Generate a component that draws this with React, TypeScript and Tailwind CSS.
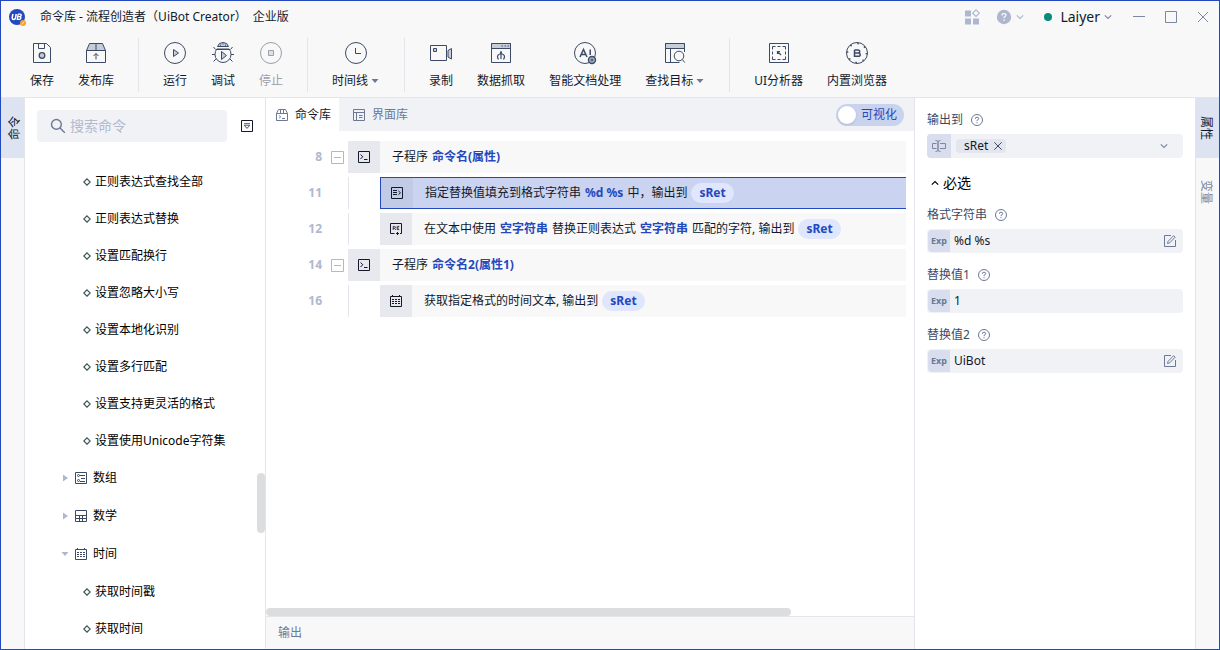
import { useState } from 'react'
import type { ReactNode } from 'react'

type IconProps = { className?: string }

type Part = { text: string; kind?: 'link' | 'chip' }

type CommandLine = {
  no: number
  child: boolean
  icon: (p: IconProps) => ReactNode
  parts: Part[]
}

const LEAVES_TOP = [
  '正则表达式查找全部',
  '正则表达式替换',
  '设置匹配换行',
  '设置忽略大小写',
  '设置本地化识别',
  '设置多行匹配',
  '设置支持更灵活的格式',
  '设置使用Unicode字符集',
]

const LEAVES_TIME = ['获取时间戳', '获取时间']

const LINES: CommandLine[] = [
  {
    no: 8,
    child: false,
    icon: TerminalIcon,
    parts: [{ text: '子程序' }, { text: '命令名(属性)', kind: 'link' }],
  },
  {
    no: 11,
    child: true,
    icon: FormatIcon,
    parts: [
      { text: '指定替换值填充到格式字符串' },
      { text: '%d %s', kind: 'link' },
      { text: '中，输出到' },
      { text: 'sRet', kind: 'chip' },
    ],
  },
  {
    no: 12,
    child: true,
    icon: RegexIcon,
    parts: [
      { text: '在文本中使用' },
      { text: '空字符串', kind: 'link' },
      { text: '替换正则表达式' },
      { text: '空字符串', kind: 'link' },
      { text: '匹配的字符, 输出到' },
      { text: 'sRet', kind: 'chip' },
    ],
  },
  {
    no: 14,
    child: false,
    icon: TerminalIcon,
    parts: [{ text: '子程序' }, { text: '命令名2(属性1)', kind: 'link' }],
  },
  {
    no: 16,
    child: true,
    icon: CalendarIcon,
    parts: [{ text: '获取指定格式的时间文本, 输出到' }, { text: 'sRet', kind: 'chip' }],
  },
]

export default function App() {
  return (
    <div className="flex h-screen flex-col overflow-hidden border border-[#2448bd] bg-[#f8f8f8] font-['Noto_Sans','Noto_Sans_CJK_SC',sans-serif] text-xs text-[#14182b]">
      <TitleBar />
      <Toolbar />
      <div className="flex min-h-0 flex-1 border-t border-[#e3e5ea]">
        <nav className="w-6 shrink-0 border-r border-[#e3e5ea]">
          <button type="button" className="flex h-[60px] w-full items-center justify-center bg-[#dee3f1] pl-1">
            <span className="rotate-180 leading-4 [text-orientation:sideways] [writing-mode:vertical-rl]">命令</span>
          </button>
        </nav>
        <Sidebar />
        <Editor />
        <Properties />
        <nav className="flex w-6 shrink-0 flex-col gap-1 border-l border-[#e3e5ea]">
          <button type="button" className="flex h-[60px] w-full items-center justify-center bg-[#dee3f1] pr-1">
            <span className="leading-4 [text-orientation:sideways] [writing-mode:vertical-rl]">属性</span>
          </button>
          <button type="button" className="flex h-[60px] w-full items-center justify-center pr-1 text-[#7d88a2]">
            <span className="leading-4 [text-orientation:sideways] [writing-mode:vertical-rl]">变量</span>
          </button>
        </nav>
      </div>
    </div>
  )
}

function TitleBar() {
  return (
    <header className="flex h-8 shrink-0 items-center justify-between pr-2.5 pl-2">
      <div className="flex items-center gap-3.5">
        <LogoIcon />
        <h1 className="flex gap-1.5">
          <span>命令库 - 流程创造者（UiBot Creator）</span>
          <span>企业版</span>
        </h1>
      </div>
      <div className="flex items-center text-[#7d88a2]">
        <button type="button" aria-label="apps" className="mr-4">
          <AppsIcon />
        </button>
        <button type="button" aria-label="help" className="mr-5 flex items-center gap-1 text-[#afb7cf]">
          <HelpSolidIcon />
          <ChevronIcon className="size-2" />
        </button>
        <button type="button" className="mr-[21px] flex items-center gap-2">
          <span className="size-2 rounded-full bg-[#0a8a78]" />
          <span className="flex items-center gap-1 text-sm text-[#14182b]">
            Laiyer
            <ChevronIcon className="size-2 text-[#7d88a2]" />
          </span>
        </button>
        <button type="button" aria-label="minimize" className="mr-5">
          <svg className="size-3" viewBox="0 0 12 12" fill="none" stroke="currentColor">
            <path d="M0 5.5h12" />
          </svg>
        </button>
        <button type="button" aria-label="maximize" className="mr-5">
          <svg className="size-3" viewBox="0 0 12 12" fill="none" stroke="currentColor">
            <path d="M.5 .5h11v11H.5z" />
          </svg>
        </button>
        <button type="button" aria-label="close">
          <svg className="size-3" viewBox="0 0 12 12" fill="none" stroke="currentColor">
            <path d="M1 1l10 10M11 1L1 11" />
          </svg>
        </button>
      </div>
    </header>
  )
}

function Toolbar() {
  return (
    <div className="flex h-16 shrink-0 items-center gap-6 pl-[29px] whitespace-nowrap">
      <ToolButton label="保存" icon={<SaveIcon />} />
      <ToolButton label="发布库" icon={<PublishIcon />} />
      <ToolDivider />
      <ToolButton label="运行" icon={<RunIcon />} />
      <ToolButton label="调试" icon={<DebugIcon />} />
      <ToolButton label="停止" icon={<StopIcon />} disabled />
      <ToolDivider />
      <ToolButton label="时间线" icon={<ClockIcon />} menu />
      <ToolDivider />
      <ToolButton label="录制" icon={<CameraIcon />} />
      <ToolButton label="数据抓取" icon={<GrabIcon />} />
      <ToolButton label="智能文档处理" icon={<AiIcon />} />
      <ToolButton label="查找目标" icon={<FindIcon />} menu />
      <ToolDivider />
      <ToolButton label="UI分析器" icon={<InspectIcon />} />
      <ToolButton label="内置浏览器" icon={<BrowserIcon />} />
    </div>
  )
}

function ToolButton({
  label,
  icon,
  menu,
  disabled,
}: {
  label: string
  icon: ReactNode
  menu?: boolean
  disabled?: boolean
}) {
  return (
    <button type="button" disabled={disabled} className="flex flex-col items-center gap-2 disabled:text-[#9b9fab]">
      {icon}
      <span className="flex items-center gap-[3px] leading-4">
        {label}
        {menu && (
          <svg className="mr-px h-2 w-2 text-[#6c7896]" viewBox="0 0 8 8" fill="currentColor">
            <path d="M.5 2h7L4 6z" />
          </svg>
        )}
      </span>
    </button>
  )
}

function ToolDivider() {
  return <span className="h-[54px] w-px bg-[#e3e5ea]" />
}

function Sidebar() {
  return (
    <aside className="relative flex w-[241px] shrink-0 flex-col border-r border-[#e3e5ea] bg-white">
      <div className="flex items-center gap-3.5 px-3 pt-3">
        <label className="flex h-8 flex-1 items-center gap-1 rounded bg-[#f1f2f6] pl-[13px]">
          <svg className="size-4 shrink-0 text-[#6c7896]" viewBox="0 0 16 16" fill="none" stroke="currentColor" strokeWidth="1.4">
            <circle cx="6.4" cy="6.4" r="4.900" />
            <path d="M10 10l4.800 4.800" />
          </svg>
          <input
            type="search"
            aria-label="搜索命令"
            placeholder="搜索命令"
            className="w-full min-w-0 bg-transparent text-sm outline-none placeholder:text-[#b3bace]"
          />
        </label>
        <button type="button" aria-label="展开">
          <svg className="size-3" viewBox="0 0 12 12" fill="none" stroke="#14182b">
            <path d="M.5 .5h11v11H.5z" />
            <path d="M3 3.5h6" stroke="#6c7896" />
            <path d="M3.2 5.2h5.6L6 8.4z" stroke="#4a5268" />
          </svg>
        </button>
      </div>
      <ul className="mt-[21px] min-h-0 flex-1 overflow-hidden">
        {LEAVES_TOP.map((name) => (
          <TreeLeaf key={name} name={name} />
        ))}
        <TreeGroup name="数组" icon={<ArrayIcon />} />
        <TreeGroup name="数学" icon={<MathIcon />} />
        <TreeGroup name="时间" icon={<CalendarIcon className="size-3 text-[#3d4a66]" />} open />
        {LEAVES_TIME.map((name) => (
          <TreeLeaf key={name} name={name} />
        ))}
      </ul>
      <span className="absolute top-[68%] right-0 h-[60px] w-2 rounded-full bg-[#dcdddf]" />
    </aside>
  )
}

function TreeLeaf({ name }: { name: string }) {
  return (
    <li className="flex h-[37px] items-center gap-1 pl-[58px] text-black">
      <svg className="size-2" viewBox="0 0 8 8" fill="none" stroke="#40595c" strokeWidth="1.2">
        <path d="M4 .8L7.2 4 4 7.2 .8 4z" />
      </svg>
      {name}
    </li>
  )
}

function TreeGroup({ name, icon, open }: { name: string; icon: ReactNode; open?: boolean }) {
  return (
    <li className="flex h-[38px] items-center pl-9 text-black">
      <svg className="mr-1.5 size-2 text-[#afb7cf]" viewBox="0 0 8 8" fill="currentColor">
        <path d={open ? 'M.5 2h7L4 6z' : 'M2 .5v7L7 4z'} />
      </svg>
      {icon}
      <span className="ml-1.5">{name}</span>
    </li>
  )
}

function Editor() {
  const [selected, setSelected] = useState(11)
  const [visual, setVisual] = useState(false)

  return (
    <main className="flex min-w-0 flex-1 flex-col border-r border-[#e3e5ea] bg-white">
      <div className="flex h-[33px] shrink-0 items-center justify-between bg-[#f1f2f6] pr-2.5">
        <div className="flex h-full" role="tablist">
          <button type="button" role="tab" aria-selected="true" className="flex items-center gap-[7px] bg-white pr-2 pl-2.5">
            <svg className="size-3" viewBox="0 0 12 12" fill="none" stroke="#6c7896">
              <path d="M.5 4.5h11v7H.5zM.5 4.5L2.5 .5h7l2 4M4.5 .5v4M7.5 .5v4M3.2 6.5l1.5 1.3-1.5 1.3M6 9.5h3" />
            </svg>
            命令库
          </button>
          <button type="button" role="tab" aria-selected="false" className="flex items-center gap-[7px] pr-2 pl-3.5 text-[#6c7896]">
            <svg className="size-3" viewBox="0 0 12 12" fill="none" stroke="currentColor">
              <path d="M.5 .5h11v11H.5zM.5 3.5h11M3.5 3.5v8M6 6.5h3.5M6 8.5h3.5" />
            </svg>
            界面库
          </button>
        </div>
        <label className="flex h-[22px] items-center gap-[5px] rounded-full bg-[#cad3ee] pr-[7px] pl-0.5 text-[#2448bd]">
          <input type="checkbox" className="sr-only" checked={visual} onChange={(e) => setVisual(e.target.checked)} />
          <span className="size-[18px] rounded-full bg-white shadow" />
          可视化
        </label>
      </div>

      <ol className="flex min-h-0 flex-1 flex-col gap-1 pt-2.5 pr-2">
        {LINES.map((line) => (
          <LineRow key={line.no} line={line} selected={line.no === selected} onSelect={() => setSelected(line.no)} />
        ))}
      </ol>

      <div className="h-2 shrink-0">
        <div className="h-full w-[81%] rounded-full bg-[#dcdddf]" />
      </div>
      <div className="flex h-[33px] shrink-0 items-center border-t border-[#e3e5ea] bg-[#f8f8f8] pl-3 text-[#6c7896]">
        输出
      </div>
    </main>
  )
}

function LineRow({ line, selected, onSelect }: { line: CommandLine; selected: boolean; onSelect: () => void }) {
  const Icon = line.icon
  return (
    <li className="flex h-8 shrink-0 items-center" onClick={onSelect}>
      <span className="w-14 text-right font-bold text-[#b0b8d0]">{line.no}</span>
      <span className="flex w-[26px] justify-end pr-1">
        {!line.child && (
          <svg className="size-[13px]" viewBox="0 0 13 13" fill="none" stroke="#b0b8d0">
            <path d="M.5 .5h12v12H.5zM3 6.5h7" />
          </svg>
        )}
      </span>
      {line.child && <span className="h-full w-8 border-l border-[#e3e5ea]" />}
      <div
        className={`flex h-full min-w-0 flex-1 items-center ${
          selected ? 'border-y border-l border-[#2448bd] bg-[#cad3ef]' : 'bg-[#f8f8f8]'
        }`}
      >
        <span className={`flex h-full w-8 shrink-0 items-center justify-center ${selected ? 'bg-[#c2cbe6]' : 'bg-[#e8e9ee]'}`}>
          <Icon className="size-3 text-[#14182b]" />
        </span>
        <p className="flex gap-1 overflow-hidden pl-3 leading-5 whitespace-nowrap">
          {line.parts.map((part, i) => (
            <LinePart key={i} part={part} />
          ))}
        </p>
      </div>
    </li>
  )
}

function LinePart({ part }: { part: Part }) {
  if (part.kind === 'chip') {
    return <span className="rounded-full bg-[#dfe6fd] px-2 font-bold text-[#2448bd]">{part.text}</span>
  }
  if (part.kind === 'link') {
    return <span className="font-bold text-[#2448bd]">{part.text}</span>
  }
  return <span>{part.text}</span>
}

function Properties() {
  return (
    <section className="w-[280px] shrink-0 bg-white px-3 pt-2">
      <FieldLabel id="output" text="输出到" />
      <div className="mb-2 flex h-6 items-center rounded bg-[#f1f2f6] pr-[15px]">
        <span className="flex size-6 items-center justify-center rounded-l bg-[#d8deed] text-[#7d88a2]">
          <svg className="size-3.5" viewBox="0 0 14 14" fill="none" stroke="currentColor">
            <path d="M4.5 4.5h-4v5h4M8 4.5h5.5v5H8M3.5 1.5q2.5 0 2.5 1.5v8q0 1.5-2.5 1.5M8.5 1.5Q6 1.5 6 3v8q0 1.5 2.5 1.5" />
          </svg>
        </span>
        <button
          id="output"
          type="button"
          className="ml-[5px] flex h-3.5 items-center gap-1.5 rounded-sm bg-[#e3e6ee] pr-1 pl-2"
        >
          sRet
          <svg className="size-2" viewBox="0 0 8 8" fill="none" stroke="#3d4a66">
            <path d="M.3 .3l7.4 7.4M7.7 .3L.3 7.7" />
          </svg>
        </button>
        <ChevronIcon className="ml-auto size-2 text-[#7d88a2]" />
      </div>

      <h2 className="flex h-[35px] items-center gap-1 pb-0.5 pl-1 text-sm text-black">
        <ChevronIcon className="size-2 rotate-180" />
        必选
      </h2>

      <ExpField id="format" label="格式字符串" value="%d %s" editable />
      <ExpField id="value1" label="替换值1" value="1" />
      <ExpField id="value2" label="替换值2" value="UiBot" editable />
    </section>
  )
}

function FieldLabel({ id, text }: { id: string; text: string }) {
  return (
    <label htmlFor={id} className="flex h-7 items-center gap-2 text-[#3d4a66]">
      {text}
      <svg className="size-3" viewBox="0 0 12 12" fill="none" stroke="#6c7896">
        <circle cx="6" cy="6" r="5.5" />
        <path d="M4.3 4.8Q4.3 3.2 6 3.2t1.7 1.5Q7.7 5.6 6 6.4v.8M6 8.2v1.1" />
      </svg>
    </label>
  )
}

function ExpField({ id, label, value, editable }: { id: string; label: string; value: string; editable?: boolean }) {
  return (
    <>
      <FieldLabel id={id} text={label} />
      <div className="mb-2 flex h-6 items-center rounded bg-[#f1f2f6] pr-[7px] pl-px">
        <span className="flex h-[22px] w-[22px] shrink-0 items-center justify-center rounded-l bg-[#d8deed] text-[9px] font-bold text-[#6c7896]">
          Exp
        </span>
        <input id={id} defaultValue={value} className="ml-1 w-full min-w-0 bg-transparent outline-none" />
        {editable && (
          <button type="button" aria-label="编辑" className="shrink-0">
            <svg className="size-3" viewBox="0 0 12 12" fill="none" stroke="#6c7896">
              <path d="M7 .5H.5v11h11V5" />
              <path d="M3.5 8.5l.6-2.2L9.6.7l1.6 1.5-5.6 5.7z" />
            </svg>
          </button>
        )}
      </div>
    </>
  )
}

function ChevronIcon({ className }: IconProps) {
  return (
    <svg className={className} viewBox="0 0 8 8" fill="none" stroke="currentColor" strokeWidth="1.2">
      <path d="M.8 2.4L4 5.4l3.2-3" />
    </svg>
  )
}

function LogoIcon() {
  return (
    <svg className="size-[17px]" viewBox="0 0 17 17">
      <circle cx="8" cy="8" r="8" fill="#2448bd" />
      <path d="M3.9 5L3.2 8.9q0 1.5 1.5 1.5T6.5 9L7.2 5" fill="none" stroke="#fff" strokeWidth="1.5" />
      <path d="M9.2 5.2h2q1.4.2 1 1.3t-1.6 1.2H8.9M10.6 7.8q1.7.2 1.2 1.4t-1.6 1.1H8.3L9.2 5" fill="none" stroke="#fff" strokeWidth="1.3" />
      <circle cx="14" cy="14" r="3" fill="#f3a23a" />
      <path d="M12.8 15.2l2.4-2.4" stroke="#fff" strokeWidth=".8" />
    </svg>
  )
}

function AppsIcon() {
  return (
    <svg className="size-4" viewBox="0 0 16 16" fill="#afb7cf">
      <path d="M1 1.5h6v6H1zM1 9.5h6v6H1zM9 9.5h6v6H9z" />
      <path d="M12 .9l3.3 3.3L12 7.5 8.7 4.2z" fill="none" stroke="#afb7cf" strokeWidth="1.2" />
    </svg>
  )
}

function HelpSolidIcon() {
  return (
    <svg className="size-4" viewBox="0 0 16 16">
      <circle cx="8" cy="8" r="7.2" fill="#afb7cf" />
      <path d="M6 6.4Q6 4.6 8 4.6t2 1.7Q10 7.3 8 8.3v1M8 10.4v1.5" fill="none" stroke="#f8f8f8" strokeWidth="1.3" />
    </svg>
  )
}

function SaveIcon() {
  return (
    <svg className="size-6" viewBox="0 0 24 24" fill="none" stroke="#3d4a66">
      <path d="M3.5 2.5H16.5L20.5 6.5V21.5H3.5z" />
      <path d="M8.5 2.5v5h6v-5" />
      <circle cx="12" cy="14.5" r="2.8" fill="#c5cdd8" strokeWidth="1.3" />
    </svg>
  )
}

function PublishIcon() {
  return (
    <svg className="size-6" viewBox="0 0 24 24" fill="none" stroke="#3d4a66">
      <path d="M5.5 2.5h13l3 7h-19z" fill="#c5cdd8" />
      <path d="M2.5 9.5h19v12h-19zM12 2.5v7M12 18.5v-6M9.5 15l2.5-2.5 2.5 2.5" />
    </svg>
  )
}

function RunIcon() {
  return (
    <svg className="size-6" viewBox="0 0 24 24" fill="none" stroke="#3d4a66">
      <circle cx="12" cy="12" r="10.5" />
      <path d="M10.5 8.5v7l5-3.5z" fill="#c5cdd8" />
    </svg>
  )
}

function DebugIcon() {
  return (
    <svg className="size-6" viewBox="0 0 24 24" fill="none" stroke="#3d4a66">
      <path d="M6.5 5.5q1-4 5.5-4t5.5 4z" fill="#c5cdd8" />
      <path d="M9 4.2h1M11.5 3h1M14 4.2h1" />
      <path d="M5.8 8Q4 10 4 13.5a8 8 0 0 0 16 0Q20 10 18.2 8zM5.5 8.5h13M4.5 8.5L2.5 6M19.5 8.5l2-2.5M4 13.5H1M20 13.5h3M5 18l-2.5 2.5M19 18l2.5 2.5" />
      <path d="M10.5 10.5v8l5-4z" fill="#c5cdd8" />
    </svg>
  )
}

function StopIcon() {
  return (
    <svg className="size-6" viewBox="0 0 24 24" fill="none" stroke="#9b9fab">
      <circle cx="12" cy="12" r="10.5" />
      <path d="M9.5 9.5h5v5h-5z" fill="#dde2e8" />
    </svg>
  )
}

function ClockIcon() {
  return (
    <svg className="size-6" viewBox="0 0 24 24" fill="none" stroke="#3d4a66">
      <circle cx="12" cy="12" r="10.5" />
      <path d="M11.5 7v5.5H17" />
    </svg>
  )
}

function CameraIcon() {
  return (
    <svg className="size-6" viewBox="0 0 24 24" fill="none" stroke="#3d4a66">
      <path d="M1.5 4.5h16v15h-16z" />
      <path d="M4.5 7.5h3v3h-3z" fill="#c5cdd8" />
      <path d="M19 9.5l3.5-2v10.5l-3.5-2z" fill="#c5cdd8" />
    </svg>
  )
}

function GrabIcon() {
  return (
    <svg className="size-6" viewBox="0 0 24 24" fill="none" stroke="#3d4a66">
      <path d="M2.5 2.5h19v5h-19z" fill="#c5cdd8" />
      <path d="M2.5 2.5h19v19h-19z" />
      <path d="M12.5 5H14M15.5 5H17M18.5 5H20" stroke="#6c7896" strokeWidth="1.6" />
      <path d="M12 10v8M11 11.5h2M12 12.500q-3.500 1-3.500 3 0 1.500 1 3M12 12.500q3.500 1 3.500 3 0 1.500-1 3" strokeWidth="1.2" />
    </svg>
  )
}

function AiIcon() {
  return (
    <svg className="size-6" viewBox="0 0 24 24" fill="none" stroke="#3d4a66">
      <circle cx="12" cy="12" r="10.5" />
      <path d="M7 16l3.5-7.5L14 16M8.2 13.5h4.600M17.2 8.500V14" strokeWidth="1.500" />
      <circle cx="19" cy="19" r="3.5" fill="#aab3c6" strokeWidth="1.4" />
      <circle cx="19" cy="19" r="1" />
    </svg>
  )
}

function FindIcon() {
  return (
    <svg className="size-6" viewBox="0 0 24 24" fill="none" stroke="#3d4a66">
      <path d="M2.5 2.5h19v5h-19z" fill="#c5cdd8" />
      <path d="M21.5 11V2.5h-19v19h14M7.5 7.5v14" />
      <circle cx="16" cy="15" r="4.8" />
      <path d="M19.300 18.500l2.500 3" />
    </svg>
  )
}

function InspectIcon() {
  return (
    <svg className="size-6" viewBox="0 0 24 24" fill="none" stroke="#3d4a66">
      <path d="M2.5 2.5h19v19h-19z" />
      <path d="M5.5 8.5v-3h3M10.5 5.5h3M15.5 5.5h3v3M18.5 10.5v3M18.5 15.5v3h-3M13.5 18.5h-3M8.5 18.5h-3v-3M5.5 13.5v-3" />
      <path d="M14 14l-3.500-3.500M10.500 13v-2.500h2.500" strokeWidth="1.200" />
    </svg>
  )
}

function BrowserIcon() {
  return (
    <svg className="size-6" viewBox="0 0 24 24" fill="none" stroke="#3d4a66">
      <circle cx="12" cy="12" r="10.5" />
      <circle cx="12" cy="12" r="9.5" strokeWidth="1.5" strokeDasharray="1.5 5.96" />
      <path d="M9.5 9h3.7q1.6.1 1.6 1.5T13.2 12H9.5M13.2 12q2 .1 2 1.7t-2 1.6H9.5V9" strokeWidth="1.5" />
    </svg>
  )
}

function ArrayIcon() {
  return (
    <svg className="size-3" viewBox="0 0 12 12" fill="none" stroke="#3d4a66">
      <path d="M.5 .5h11v11H.5zM5 3.5h5M6 6.5h4M5 9.5h5" />
      <circle cx="3.5" cy="3.5" r="1" />
      <circle cx="3.5" cy="8.5" r="1" />
    </svg>
  )
}

function MathIcon() {
  return (
    <svg className="size-3" viewBox="0 0 12 12" fill="none" stroke="#3d4a66">
      <path d="M.5 .5h11v11H.5zM.5 5.5h11M.5 8.5h11M4.5 5.5v6M7.5 5.5v6" />
    </svg>
  )
}

function CalendarIcon({ className }: IconProps) {
  return (
    <svg className={className} viewBox="0 0 12 12" fill="none" stroke="currentColor">
      <path d="M.5 1.5h11v10H.5zM2.5 0v2M9.5 0v2" />
      <path d="M2 4.5h8M2 6.5h8M2 8.5h8" strokeDasharray="2 1" />
    </svg>
  )
}

function TerminalIcon({ className }: IconProps) {
  return (
    <svg className={className} viewBox="0 0 12 12" fill="none" stroke="currentColor">
      <path d="M.5 .5h11v11H.5zM2.5 3.5L4.8 5.7 2.5 8M6 8.5h3.5" />
    </svg>
  )
}

function FormatIcon({ className }: IconProps) {
  return (
    <svg className={className} viewBox="0 0 12 12" fill="none" stroke="currentColor">
      <path d="M.5 .5h11v11H.5zM2 3.5h4M2 5.5h4M2 7.5h4M7.5 4L9.5 5.8l-2 1.8" />
    </svg>
  )
}

function RegexIcon({ className }: IconProps) {
  return (
    <svg className={className} viewBox="0 0 12 12" fill="none" stroke="currentColor">
      <path d="M4.5 10.5h-4V.5h11v10H10M6 10.5h3M7.5 9v3" />
      <path d="M3.2 7V3.4h1.3q1 .1 1 .9t-1 .9H3.2M4.5 5.3L5.800 7M9.300 3.400H7.200V6.600h2.100M7.200 5H9" strokeWidth=".8" />
    </svg>
  )
}
